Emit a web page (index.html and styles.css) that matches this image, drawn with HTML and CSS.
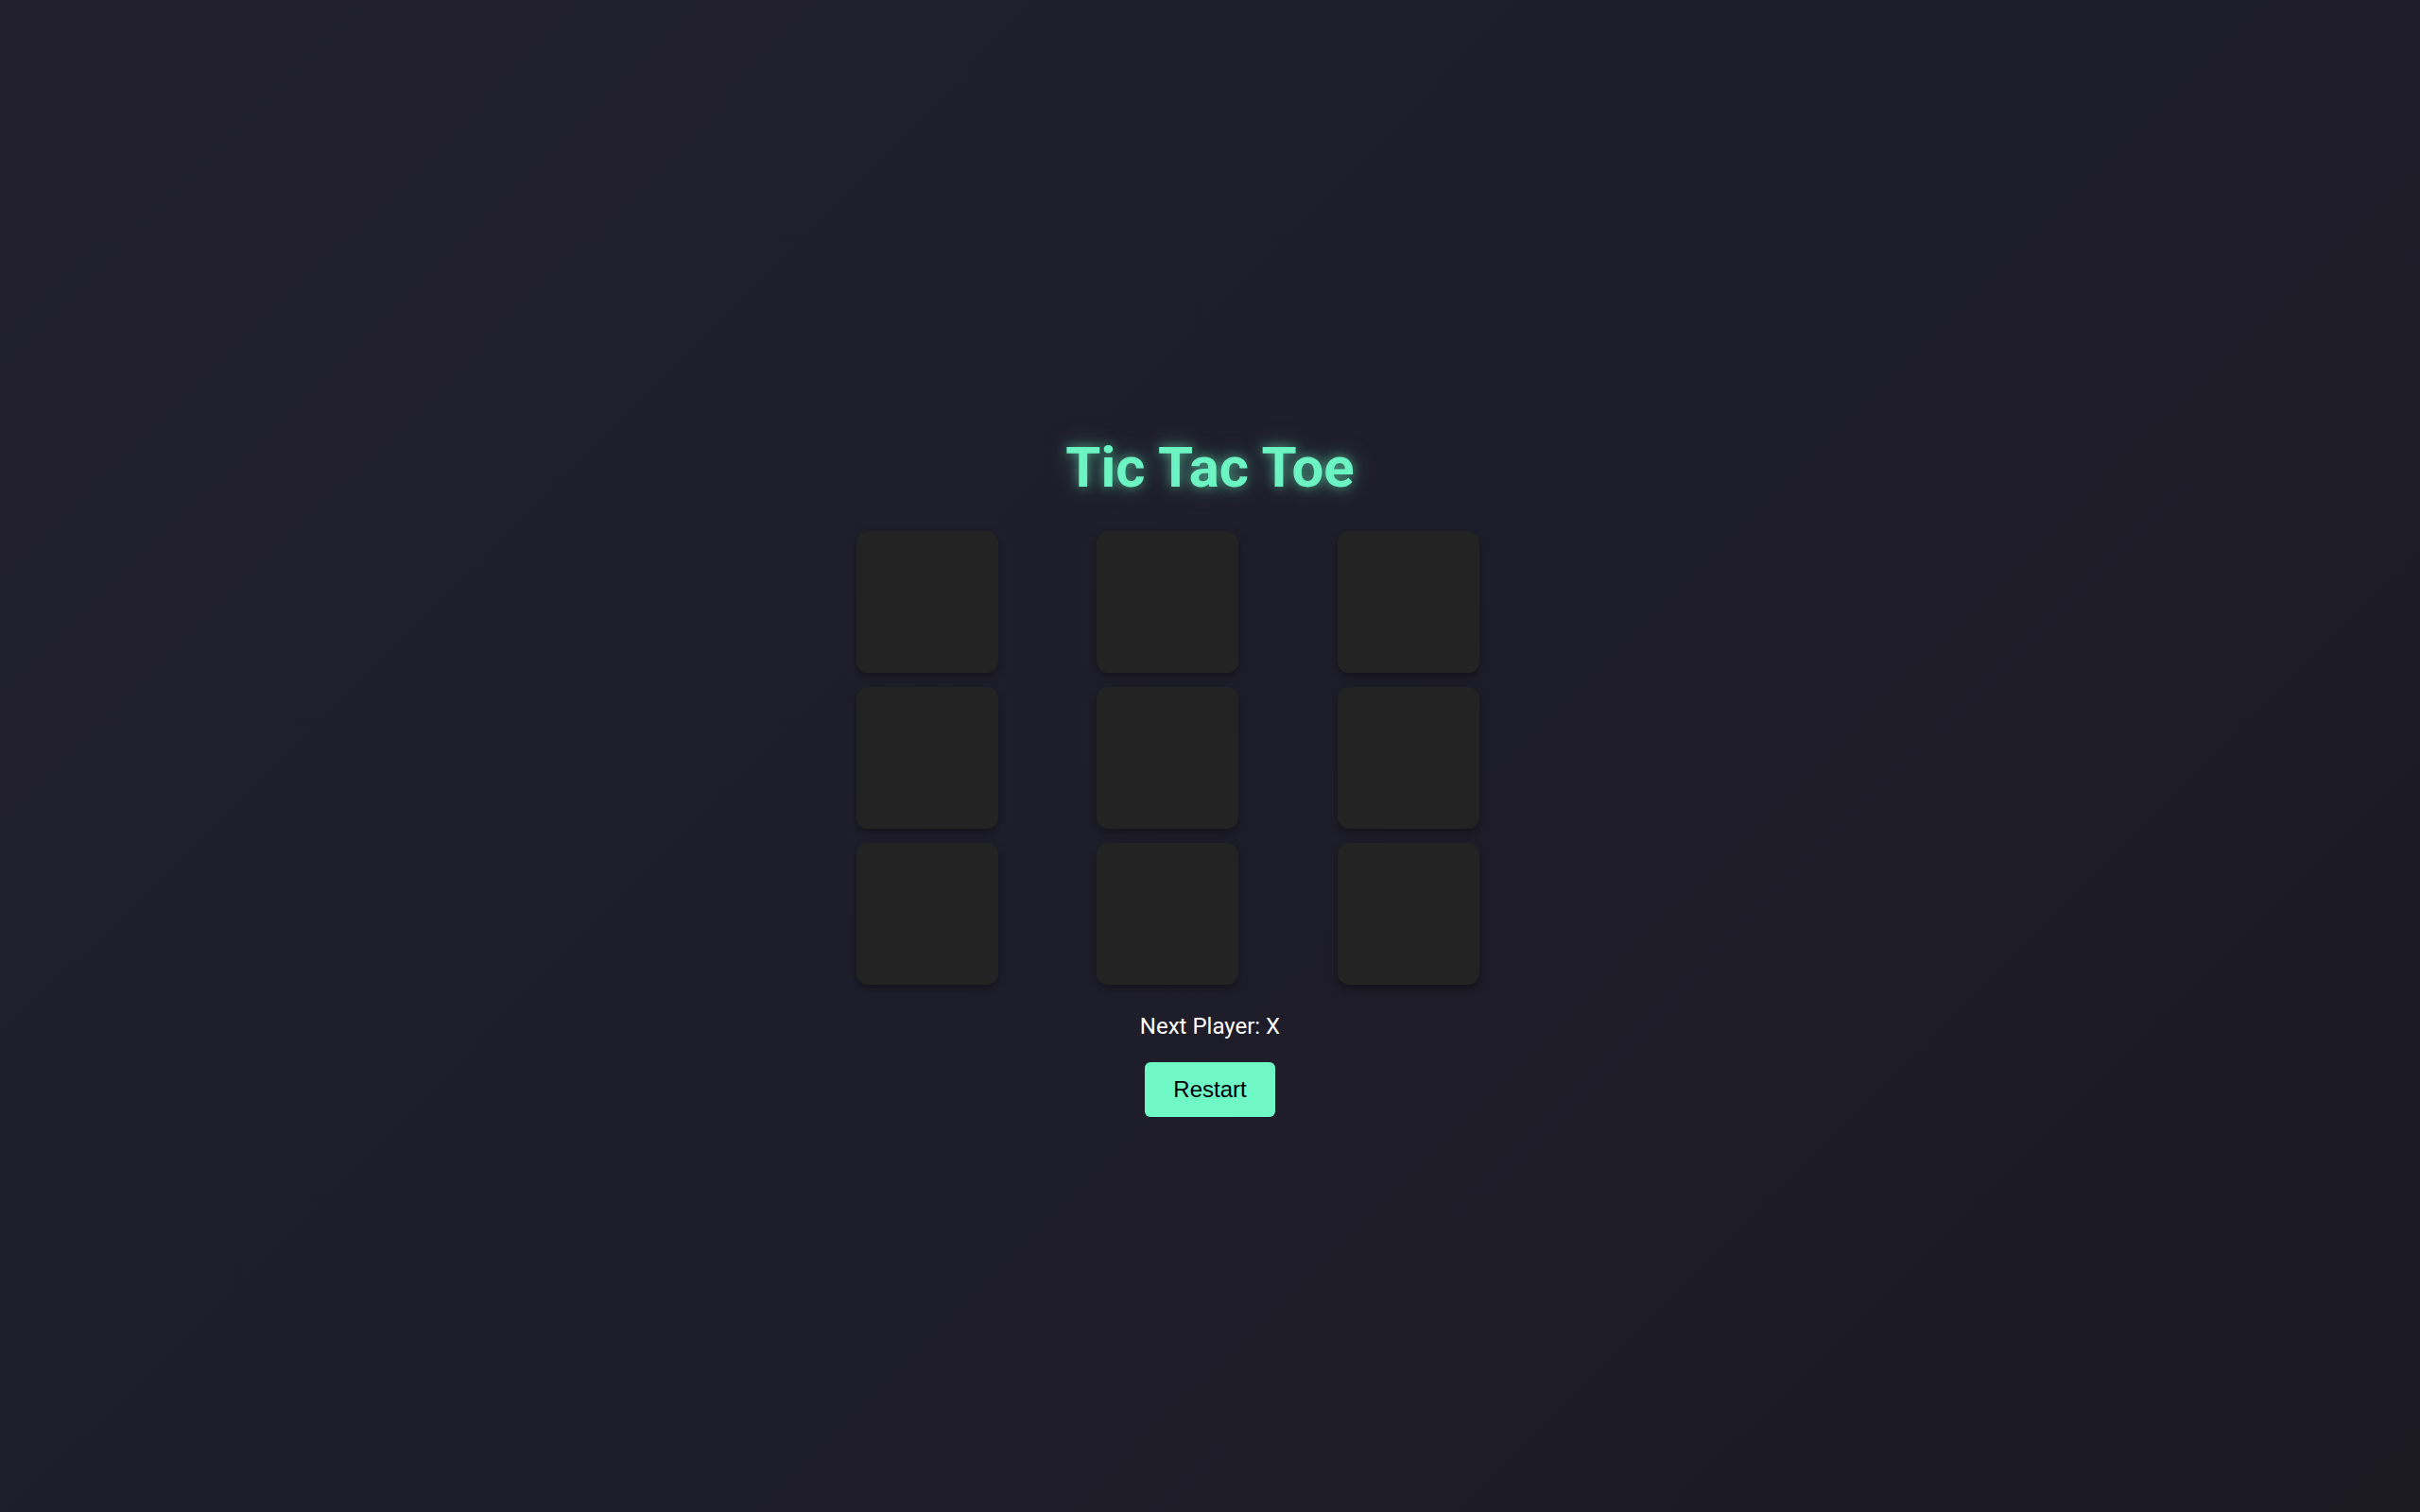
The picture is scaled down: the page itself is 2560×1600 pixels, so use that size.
FILE: index.html
```html
<!DOCTYPE html>
<html lang="en">
<head>
<meta charset="utf-8">
<title>Tic Tac Toe</title>
<link rel="stylesheet" href="styles.css">
</head>
<body>
  <main class="game">
    <h1 class="title">Tic Tac Toe</h1>
    <div class="board">
      <button class="cell"></button>
      <button class="cell"></button>
      <button class="cell"></button>
      <button class="cell"></button>
      <button class="cell"></button>
      <button class="cell"></button>
      <button class="cell"></button>
      <button class="cell"></button>
      <button class="cell"></button>
    </div>
    <p class="status">Next Player: X</p>
    <button class="restart">Restart</button>
  </main>
</body>
</html>
```

FILE: styles.css
```css
html, body {
  margin: 0;
  padding: 0;
}

body {
  min-height: 100vh;
  background: linear-gradient(135deg, #22202f 0%, #1e1d2a 50%, #1b1a23 100%);
  font-family: Roboto, "Liberation Sans", sans-serif;
  color: #ffffff;
  display: flex;
  align-items: center;
  justify-content: center;
}

.game {
  display: flex;
  flex-direction: column;
  align-items: center;
}

.title {
  margin: 40px 0 32px;
  font-size: 60px;
  font-weight: 700;
  color: #6cf5c2;
  text-shadow: 0 0 12px rgba(108, 245, 194, 0.55), 0 0 28px rgba(108, 245, 194, 0.3);
}

.board {
  width: 748px;
  display: grid;
  grid-template-columns: repeat(3, 1fr);
  gap: 15px;
}

.cell {
  width: 150px;
  height: 150px;
  border: none;
  border-radius: 12px;
  background: #232323;
  box-shadow: 0 4px 10px rgba(0, 0, 0, 0.35);
  padding: 0;
}

.status {
  margin: 30px 0 24px;
  font-size: 24px;
  line-height: 28px;
}

.restart {
  font-family: "Liberation Sans", Arial, sans-serif;
  font-size: 24px;
  padding: 15px 30px;
  border: none;
  border-radius: 6px;
  background: #6ff7c6;
  color: #000000;
}
```
